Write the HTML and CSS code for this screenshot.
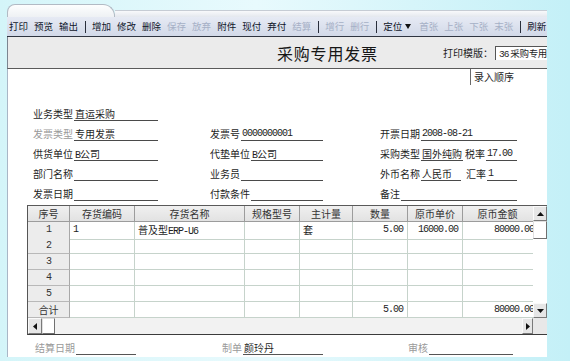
FILE: index.html
```html
<!DOCTYPE html>
<html lang="zh-CN">
<head>
<meta charset="utf-8">
<title>采购专用发票</title>
<link rel="stylesheet" href="styles.css">
</head>
<body>
<div class="window">
  <div class="tabstrip"><div class="tab"></div><div class="tabrest"></div></div>
  <div class="toolbar">
    <span class="tb">打印</span><span class="tb">预览</span><span class="tb">输出</span>
    <span class="sep"></span>
    <span class="tb">增加</span><span class="tb">修改</span><span class="tb">删除</span>
    <span class="tb off">保存</span><span class="tb off">放弃</span>
    <span class="tb">附件</span><span class="tb">现付</span><span class="tb">弃付</span>
    <span class="tb off">结算</span>
    <span class="sep"></span>
    <span class="tb off">增行</span><span class="tb off">删行</span>
    <span class="sep"></span>
    <span class="tb pos">定位<svg class="caret" width="6" height="5" viewBox="0 0 6 5"><polygon points="0,0 6,0 3,5" fill="#111"/></svg></span>
    <span class="tb off">首张</span><span class="tb off">上张</span><span class="tb off">下张</span><span class="tb off">末张</span>
    <span class="sep"></span>
    <span class="tb">刷新</span>
  </div>
  <div class="titlebar">
    <div class="title">采购专用发票</div>
    <div class="tpl"><span class="tpl-lbl">打印模版：</span><span class="combo"><span class="mono">36</span> 采购专用</span></div>
  </div>
  <div class="content">
    <div class="orderrow"><div class="orderbox">录入顺序</div></div>
    <div class="form">
      <div class="fld c1"><span class="lbl">业务类型</span><span class="line">直运采购</span></div>
      <div></div>
      <div></div>

      <div class="fld c1"><span class="lbl dim">发票类型</span><span class="line">专用发票</span></div>
      <div class="fld c2"><span class="lbl">发票号</span><span class="line mono">0000000001</span></div>
      <div class="fld c3"><span class="lbl">开票日期</span><span class="line mono">2008-08-21</span></div>

      <div class="fld c1"><span class="lbl">供货单位</span><span class="line"><span class="mono">B</span>公司</span></div>
      <div class="fld c2"><span class="lbl">代垫单位</span><span class="line"><span class="mono">B</span>公司</span></div>
      <div class="fld c3"><span class="lbl">采购类型</span><span class="line w42">国外纯购</span><span class="lbl ml2">税率</span><span class="line mono">17.00</span></div>

      <div class="fld c1"><span class="lbl">部门名称</span><span class="line"></span></div>
      <div class="fld c2"><span class="lbl">业务员</span><span class="line"></span></div>
      <div class="fld c3"><span class="lbl">外币名称</span><span class="line w40">人民币</span><span class="lbl ml5">汇率</span><span class="line mono">1</span></div>

      <div class="fld c1"><span class="lbl">发票日期</span><span class="line"></span></div>
      <div class="fld c2"><span class="lbl">付款条件</span><span class="line"></span></div>
      <div class="fld c3"><span class="lbl">备注</span><span class="line"></span></div>
    </div>

    <div class="grid">
      <div class="clip">
        <div class="trow head">
          <div class="cell">序号</div><div class="cell">存货编码</div><div class="cell">存货名称</div><div class="cell">规格型号</div>
          <div class="cell">主计量</div><div class="cell">数量</div><div class="cell">原币单价</div><div class="cell last">原币金额</div>
        </div>
        <div class="trow">
          <div class="cell idx mono">1</div><div class="cell l mono">1</div><div class="cell l">普及型<span class="mono">ERP-U6</span></div><div class="cell"></div>
          <div class="cell l">套</div><div class="cell r mono">5.00</div><div class="cell r mono">16000.00</div><div class="cell r amt mono">80000.00</div>
        </div>
        <div class="trow">
          <div class="cell idx mono">2</div><div class="cell"></div><div class="cell"></div><div class="cell"></div><div class="cell"></div><div class="cell"></div><div class="cell"></div><div class="cell"></div>
        </div>
        <div class="trow">
          <div class="cell idx mono">3</div><div class="cell"></div><div class="cell"></div><div class="cell"></div><div class="cell"></div><div class="cell"></div><div class="cell"></div><div class="cell"></div>
        </div>
        <div class="trow">
          <div class="cell idx mono">4</div><div class="cell"></div><div class="cell"></div><div class="cell"></div><div class="cell"></div><div class="cell"></div><div class="cell"></div><div class="cell"></div>
        </div>
        <div class="trow">
          <div class="cell idx mono">5</div><div class="cell"></div><div class="cell"></div><div class="cell"></div><div class="cell"></div><div class="cell"></div><div class="cell"></div><div class="cell"></div>
        </div>
        <div class="trow">
          <div class="cell idx">合计</div><div class="cell"></div><div class="cell"></div><div class="cell"></div><div class="cell"></div><div class="cell r mono">5.00</div><div class="cell"></div><div class="cell r amt mono">80000.00</div>
        </div>
      </div>
      <div class="vscroll">
        <div class="sbtn"><svg width="7" height="4" viewBox="0 0 7 4"><polygon points="0,4 7,4 3.5,0" fill="#111"/></svg></div>
        <div class="vthumb"></div>
        <div class="vtrack"></div>
        <div class="sbtn"><svg width="7" height="4" viewBox="0 0 7 4"><polygon points="0,0 7,0 3.5,4" fill="#111"/></svg></div>
      </div>
      <div class="hscroll">
        <div class="hbtn"><svg width="4" height="7" viewBox="0 0 4 7"><polygon points="4,0 4,7 0,3.5" fill="#111"/></svg></div>
        <div class="hthumb"></div>
        <div class="htrack"></div>
        <div class="hbtn narrow"><svg width="4" height="7" viewBox="0 0 4 7"><polygon points="0,0 0,7 4,3.5" fill="#111"/></svg></div>
      </div>
      <div class="corner"></div>
    </div>

    <div class="footer">
      <div class="fld f1"><span class="lbl dim">结算日期</span><span class="line"></span></div>
      <div class="fld f2"><span class="lbl dim">制单</span><span class="line">颜玲丹</span></div>
      <div class="fld f3"><span class="lbl dim">审核</span><span class="line"></span></div>
    </div>
  </div>
</div>
</body>
</html>
```

FILE: styles.css
```css
html, body {
  margin: 0;
  padding: 0;
}
body {
  width: 570px;
  height: 361px;
  overflow: hidden;
  background: linear-gradient(90deg, #d4f5f9 0%, #e8fafd 45%, #c4f0f7 100%);
  font-family: "Noto Sans CJK SC", "Noto Sans", sans-serif;
  color: #1e1e1e;
}
.window {
  margin-left: 7px;
  width: 540px;
  height: 357px;
  display: flex;
  flex-direction: column;
  overflow: hidden;
}
.mono {
  font-family: "Liberation Mono", "DejaVu Sans Mono", monospace;
  letter-spacing: -1px;
}

/* tab strip */
.tabstrip {
  height: 17px;
  display: flex;
  align-items: flex-end;
  flex: none;
}
.tab {
  width: 108px;
  height: 13px;
  box-sizing: border-box;
  border: 1px solid #b2bac4;
  border-bottom: none;
  border-radius: 8px 12px 0 0;
  background: linear-gradient(#fdfefe, #eef1f4);
}
.tabrest {
  flex: 1;
  height: 6px;
  border-top: 1px solid #c6ccd4;
  background: linear-gradient(#f8f9fb, #e4e8ee);
}

/* toolbar */
.toolbar {
  height: 19px;
  flex: none;
  display: flex;
  align-items: center;
  gap: 6px;
  padding-left: 2px;
  background: linear-gradient(#e6eaf4, #d2d9e8);
  border-bottom: 1px solid #2e3440;
  font-size: 9.5px;
  white-space: nowrap;
}
.tb {
  color: #10162a;
  line-height: 13px;
}
.tb.off {
  color: #a6b0c6;
}
.tb.pos {
  display: flex;
  align-items: center;
  gap: 3px;
  width: 30px;
}
.sep {
  width: 1px;
  height: 12px;
  background: #2a2f3c;
  margin-left: 1px;
  flex: none;
}

/* title */
.titlebar {
  height: 31px;
  flex: none;
  display: flex;
  align-items: center;
  background: #ebebeb;
  border-left: 1px solid #7c8490;
  border-bottom: 1px solid #5a5a5a;
}
.title {
  margin-left: 269px;
  font-size: 16px;
  letter-spacing: 0.8px;
  color: #161616;
  white-space: nowrap;
}
.tpl {
  margin-left: auto;
  display: flex;
  align-items: center;
  gap: 2px;
  font-size: 10px;
  white-space: nowrap;
}
.combo {
  width: 52px;
  height: 14px;
  box-sizing: border-box;
  background: #fff;
  border-top: 1px solid #555;
  border-left: 1px solid #555;
  padding-left: 3px;
  font-size: 9.5px;
  line-height: 13px;
  white-space: nowrap;
  letter-spacing: -0.3px;
}

/* content */
.content {
  flex: 1;
  background: #fff;
  border-left: 1px solid #a9b6c6;
  display: flex;
  flex-direction: column;
}
.orderrow {
  display: flex;
  justify-content: flex-end;
}
.orderbox {
  width: 77px;
  height: 16px;
  box-sizing: border-box;
  border-left: 1px solid #6a6a6a;
  padding-left: 3px;
  font-size: 10px;
  line-height: 16px;
}

.form {
  margin-top: 16px;
  padding-left: 25px;
  display: grid;
  grid-template-columns: 177px 170px 137px;
  grid-auto-rows: 20px;
}
.fld {
  display: flex;
  align-items: flex-end;
}
.fld.c1 { width: 125px; }
.fld.c2 { width: 113px; }
.fld.c3 { width: 137px; }
.lbl {
  font-size: 10px;
  line-height: 14px;
  white-space: nowrap;
  color: #1e1e1e;
}
.lbl.dim {
  color: #9a9a9a;
}
.ml2 { margin-left: 2px; }
.ml5 { margin-left: 5px; }
.line {
  flex: 1;
  height: 14px;
  box-sizing: border-box;
  margin-left: 1px;
  padding-left: 1px;
  border-bottom: 1px solid #4a4a4a;
  font-size: 10px;
  line-height: 13px;
  white-space: nowrap;
}
.line.w42 { flex: none; width: 42px; }
.line.w40 { flex: none; width: 40px; }

/* grid */
.grid {
  margin-top: 4px;
  margin-left: 19px;
  display: grid;
  grid-template-columns: 505px 14px;
  grid-template-rows: 112px 16px;
  border-left: 1px solid #555;
  border-top: 1px solid #5a5a5a;
  border-bottom: 1px solid #3c3c3c;
}
.clip {
  overflow: hidden;
}
.trow {
  display: grid;
  grid-template-columns: 42px 65px 110px 55px 53px 55px 55px 80px;
  height: 16px;
  width: 515px;
}
.cell {
  box-sizing: border-box;
  border-right: 1px solid #c6d3cb;
  border-bottom: 1px solid #c6d3cb;
  font-size: 10px;
  line-height: 15px;
  white-space: nowrap;
  text-align: center;
  color: #1e1e1e;
}
.cell.l { text-align: left; padding-left: 3px; }
.cell.r { text-align: right; padding-right: 4px; }
.cell.amt { padding-right: 8px; }
.trow.head .cell {
  background: linear-gradient(#f0f0f0, #e2e2e2);
  border-right-color: #9c9c9c;
  border-bottom-color: #9c9c9c;
  color: #333;
}
.trow.head .cell.last {
  padding-right: 10px;
}
.cell.idx {
  background: #ececec;
  border-right-color: #a8a8a8;
  border-bottom-color: #b8b8b8;
  color: #333;
}

.vscroll {
  display: flex;
  flex-direction: column;
  background: #fff;
}
.sbtn {
  height: 15px;
  box-sizing: border-box;
  background: #e6e6e6;
  border: 1px solid;
  border-color: #fafafa #7a7a7a #7a7a7a #fafafa;
  display: flex;
  align-items: center;
  justify-content: center;
}
.vthumb {
  height: 18px;
  box-sizing: border-box;
  background: #fff;
  border: 1px solid;
  border-color: #e0e0e0 #707070 #707070 #e0e0e0;
}
.vtrack {
  flex: 1;
  background: #fff;
}
.hscroll {
  display: flex;
  background: #f2f2f2;
}
.hbtn {
  width: 14px;
  box-sizing: border-box;
  background: #e6e6e6;
  border: 1px solid;
  border-color: #fafafa #7a7a7a #7a7a7a #fafafa;
  display: flex;
  align-items: center;
  justify-content: center;
}
.hbtn.narrow {
  width: 11px;
}
.hthumb {
  width: 13px;
  box-sizing: border-box;
  background: #fff;
  border: 1px solid;
  border-color: #e0e0e0 #707070 #707070 #e0e0e0;
}
.htrack {
  flex: 1;
}
.corner {
  background: #e8e8e8;
}

/* footer */
.footer {
  padding-top: 6px;
  padding-left: 27px;
  display: grid;
  grid-template-columns: 187px 186px 110px;
}
.fld.f1 { width: 101px; }
.fld.f2 { width: 101px; }
.fld.f3 { width: 105px; }
.footer .line {
  border-bottom-color: #555;
}
```
